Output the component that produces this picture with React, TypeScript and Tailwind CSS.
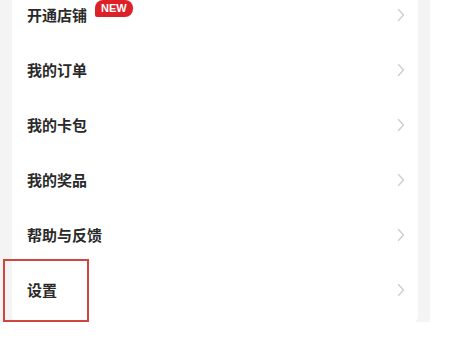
import React from "react";

const items = ["开通店铺", "我的订单", "我的卡包", "我的奖品", "帮助与反馈", "设置"];

function Chevron() {
  return (
    <svg width="8" height="14" viewBox="0 0 8 14" fill="none" className="shrink-0">
      <path d="M1.5 1.5L6.5 7L1.5 12.5" stroke="#cdcdcd" strokeWidth="1.3" strokeLinecap="round" strokeLinejoin="round" />
    </svg>
  );
}

export default function App() {
  return (
    <div className="w-[450px] h-[338px] bg-white overflow-hidden" style={{ fontFamily: '"Noto Sans CJK SC", "Noto Sans", sans-serif' }}>
      <div className="w-[430px] h-[335px] bg-[#f4f4f4] px-[12px]">
        <div className="relative -mt-[13px] bg-white rounded-b-[10px] pb-[8px]">
          {items.map((label, i) => (
            <div key={label} className="flex items-center h-[55px] pl-[15px] pr-[13px]">
              <span className="text-[15px] font-bold text-[#2a2a2a] leading-none">{label}</span>
              {i === 0 && (
                <span
                  className="ml-[8px] -mt-[12px] bg-[#dc2228] text-white text-[11px] font-semibold leading-none px-[6px] py-[3px] rounded-[8px] rounded-bl-[2px]"
                  style={{ fontFamily: '"Liberation Sans", sans-serif' }}
                >
                  NEW
                </span>
              )}
              <div className="flex-1" />
              <Chevron />
            </div>
          ))}
          <div className="absolute left-[-9px] top-[272px] w-[86px] h-[63px] border-2 border-[#d2443f]" />
        </div>
      </div>
    </div>
  );
}
